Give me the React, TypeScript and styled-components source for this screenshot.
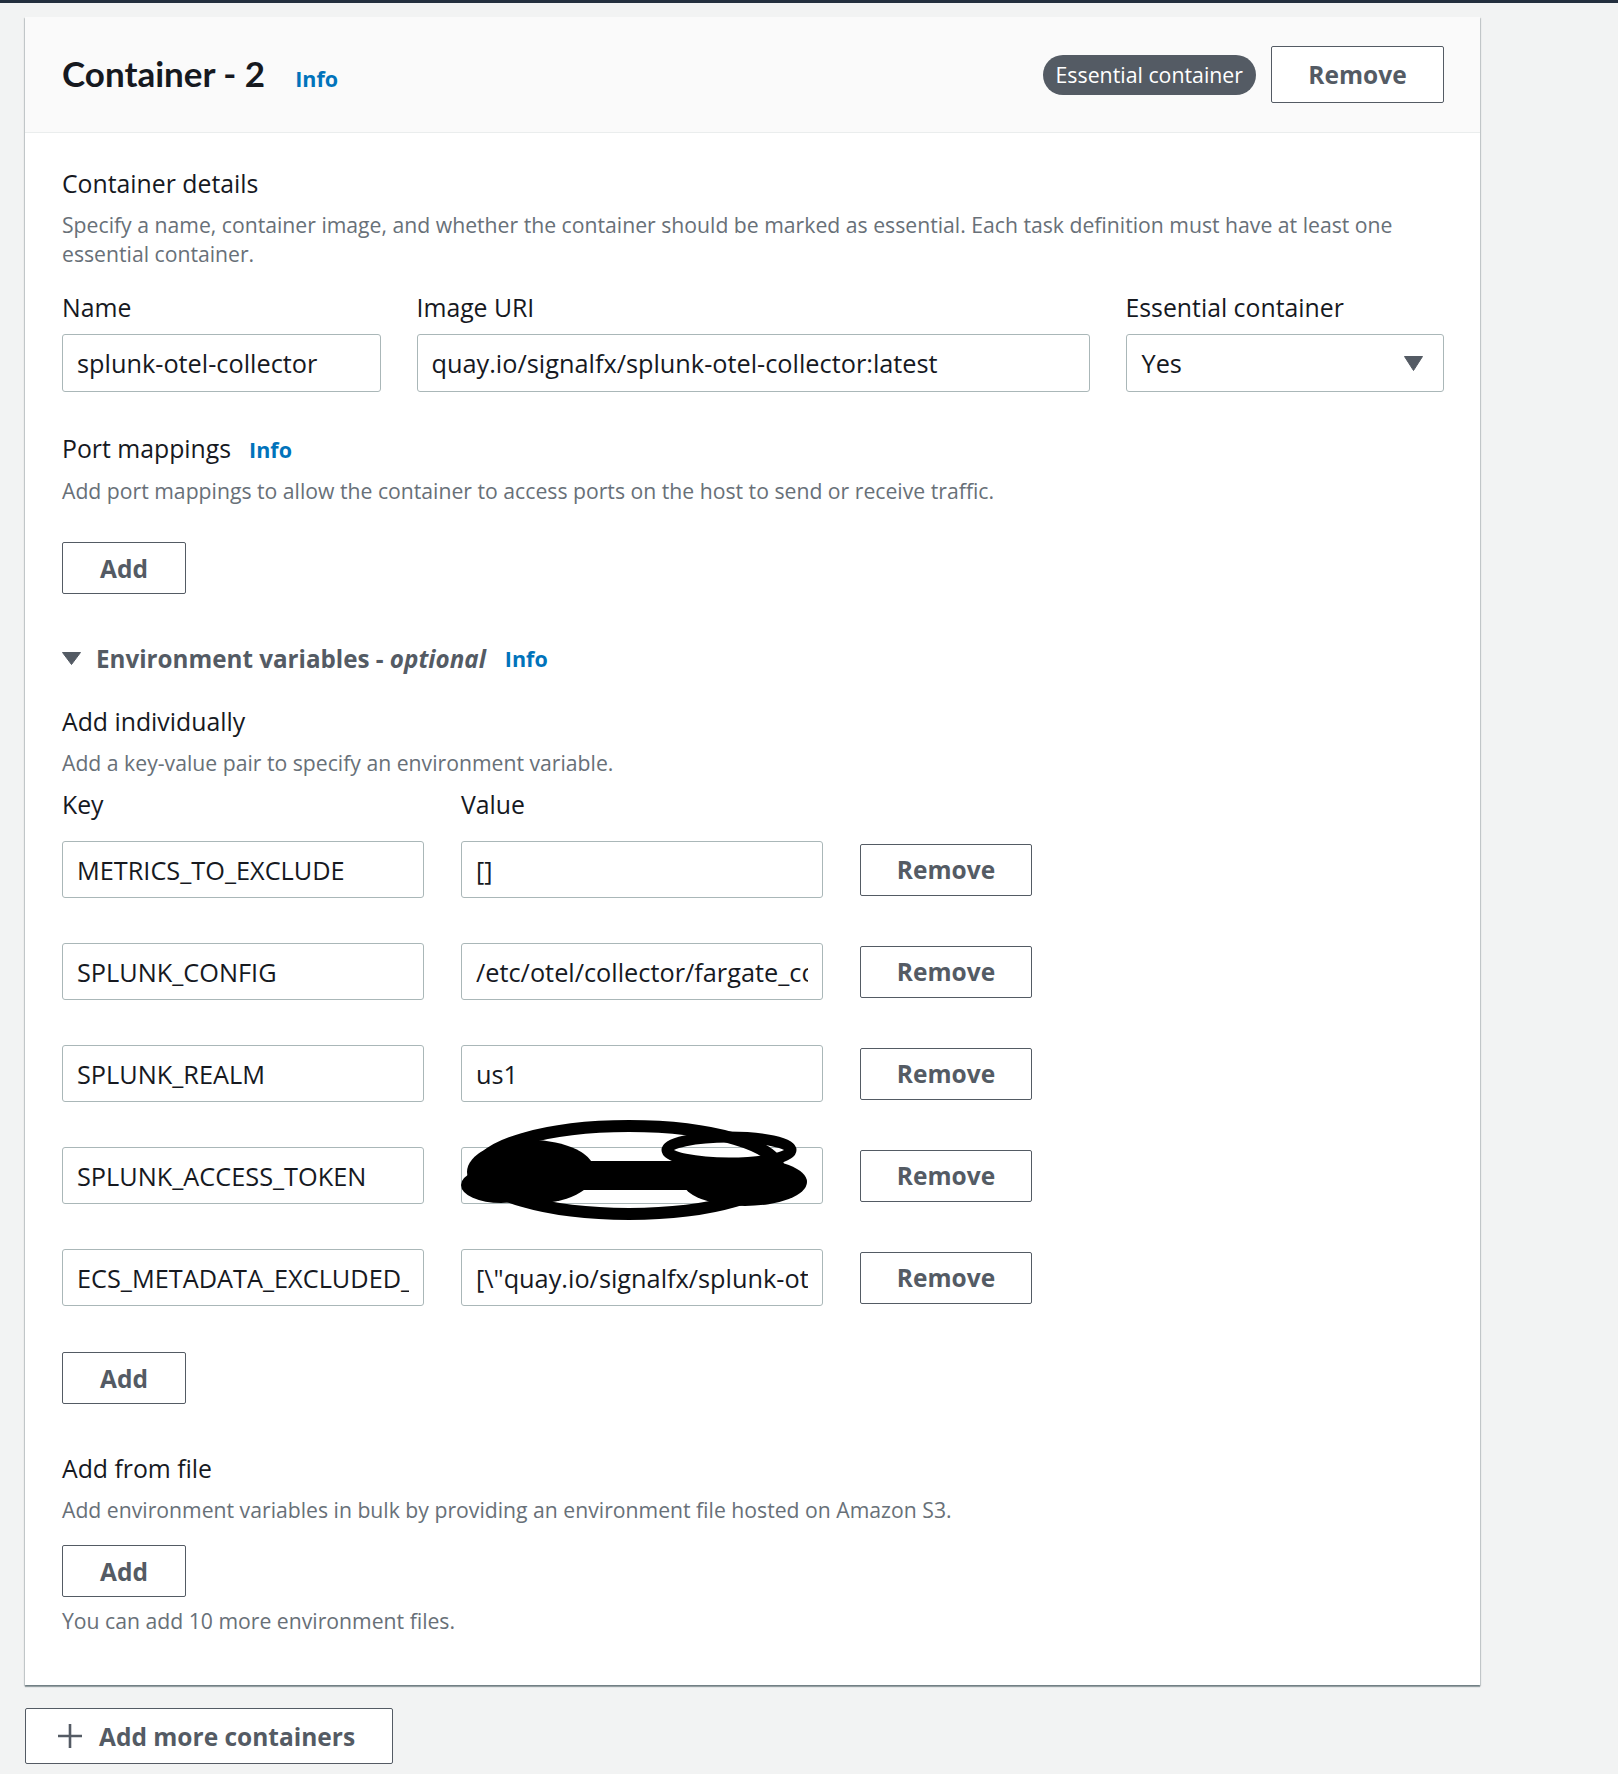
import { ReactElement, Fragment } from 'react'
import styled, { createGlobalStyle } from 'styled-components'

const GlobalStyle = createGlobalStyle`
  html, body {
    margin: 0;
    background: #f2f3f3;
  }
  body {
    font-family: "Open Sans", Lato, sans-serif;
    color: #16191f;
  }
  * {
    box-sizing: border-box;
  }
`

const Page = styled.div`
  min-height: 1774px;
  border-top: 3px solid #232f3e;
  padding: 14px 0 0 25px;
`

const Card = styled.section`
  width: 1455px;
  background: #ffffff;
  box-shadow: 0 2px 1px 0 rgba(0, 28, 36, 0.35), 1px 1px 1px 0 rgba(0, 28, 36, 0.15),
    -1px 1px 1px 0 rgba(0, 28, 36, 0.15);
`

const CardHeader = styled.header`
  height: 116px;
  display: flex;
  align-items: center;
  padding: 0 36px 0 37px;
  background: #fafafa;
  border-bottom: 1px solid #eaeded;
`

const TitleGroup = styled.div`
  display: flex;
  align-items: baseline;
  padding-bottom: 4px;
`

const Title = styled.h2`
  margin: 0;
  font-family: Lato, "Open Sans", sans-serif;
  font-size: 35px;
  line-height: 42px;
  font-weight: 700;
  color: #16191f;
`

const InfoLink = styled.a<{ $gap?: number }>`
  margin-left: ${(p) => p.$gap ?? 18}px;
  font-size: 21.5px;
  font-weight: 700;
  color: #0073bb;
  text-decoration: none;
  cursor: pointer;
`

const HeaderActions = styled.div`
  margin-left: auto;
  display: flex;
  align-items: center;
  gap: 15px;
`

const Badge = styled.span`
  display: inline-flex;
  align-items: center;
  height: 40px;
  padding: 0 13px;
  border-radius: 20px;
  background: #545b64;
  color: #ffffff;
  font-size: 21.3px;
`

const Button = styled.button<{ $width: number; $height?: number; $start?: boolean }>`
  display: inline-flex;
  align-items: center;
  justify-content: ${(p) => (p.$start ? 'flex-start' : 'center')};
  gap: 16px;
  width: ${(p) => p.$width}px;
  height: ${(p) => p.$height ?? 52}px;
  padding: ${(p) => (p.$start ? '0 0 0 31px' : '0')};
  border: 1px solid #545b64;
  border-radius: 2px;
  background: #ffffff;
  color: #545b64;
  font-family: inherit;
  font-size: 24.5px;
  font-weight: 700;
  cursor: pointer;
`

const CardBody = styled.div`
  padding: 33px 36px 50px 37px;
`

const Block = styled.div<{ $top?: number }>`
  margin-top: ${(p) => p.$top ?? 0}px;
`

const Heading = styled.div<{ $top?: number }>`
  display: flex;
  align-items: baseline;
  margin-top: ${(p) => p.$top ?? 0}px;
  font-size: 24.8px;
  line-height: 35px;
  color: #16191f;
`

const Description = styled.p<{ $top?: number }>`
  margin: ${(p) => p.$top ?? 9}px 0 0;
  font-size: 21.2px;
  line-height: 29px;
  color: #687078;
`

const FieldsGrid = styled.div`
  display: grid;
  grid-template-columns: repeat(12, 1fr);
  column-gap: 36px;
  margin-top: 22px;
`

const Field = styled.div<{ $span: number }>`
  grid-column: span ${(p) => p.$span};
`

const Label = styled.label`
  display: block;
  font-size: 24.8px;
  line-height: 35px;
  color: #16191f;
`

const TextInput = styled.input<{ $height?: number }>`
  display: block;
  width: 100%;
  height: ${(p) => p.$height ?? 58}px;
  margin-top: ${(p) => (p.$height ? 0 : 9)}px;
  padding: 0 14px;
  border: 1px solid #aab7b8;
  border-radius: 3px;
  background: #ffffff;
  font-family: inherit;
  font-size: 25.3px;
  color: #16191f;
  outline: none;
`

const Select = styled.div`
  display: flex;
  align-items: center;
  justify-content: space-between;
  height: 58px;
  margin-top: 9px;
  padding: 0 20px 0 15px;
  border: 1px solid #aab7b8;
  border-radius: 3px;
  font-size: 25.3px;
  color: #16191f;
`

const ExpandHeader = styled.div`
  display: flex;
  align-items: center;
  margin-top: 47px;
  height: 35px;
  font-size: 24.2px;
  font-weight: 700;
  color: #545b64;
`

const Caret = styled.svg`
  margin-right: 15px;
  flex: none;
`

const Optional = styled.em`
  font-style: italic;
`

const PairGrid = styled.div<{ $top?: number; $gap?: number }>`
  display: grid;
  grid-template-columns: 362px 362px 172px;
  column-gap: 37px;
  row-gap: ${(p) => p.$gap ?? 45}px;
  align-items: center;
  margin-top: ${(p) => p.$top ?? 0}px;
`

const ValueCell = styled.div`
  position: relative;
`

const Redaction = styled.svg`
  position: absolute;
  left: -5px;
  top: -34px;
  pointer-events: none;
`

const PlusIcon = styled.svg`
  flex: none;
`

const AddMore = styled.div`
  margin-top: 23px;
`

const envVars = [
  { key: 'METRICS_TO_EXCLUDE', value: '[]' },
  { key: 'SPLUNK_CONFIG', value: '/etc/otel/collector/fargate_config.yaml' },
  { key: 'SPLUNK_REALM', value: 'us1' },
  { key: 'SPLUNK_ACCESS_TOKEN', value: '', redacted: true },
  { key: 'ECS_METADATA_EXCLUDED_IMAGES', value: '[\\"quay.io/signalfx/splunk-otel-collector:latest\\"]' },
]

// black marker scribble hiding the token value
const Scribble = (): ReactElement => (
  <Redaction width="360" height="113" viewBox="455 1112 360 113">
    <ellipse cx="628" cy="1169" rx="150" ry="44" fill="none" stroke="#000" strokeWidth="12" />
    <ellipse cx="530" cy="1171" rx="64" ry="32" fill="#000" />
    <ellipse cx="500" cy="1184" rx="40" ry="18" fill="#000" />
    <rect x="580" y="1160" width="135" height="29" fill="#000" />
    <ellipse cx="728" cy="1149" rx="62" ry="13" fill="none" stroke="#000" strokeWidth="11" />
    <ellipse cx="744" cy="1181" rx="62" ry="24" fill="#000" />
  </Redaction>
)

const App = (): ReactElement => {
  return (
    <Page>
      <GlobalStyle />
      <Card>
        <CardHeader>
          <TitleGroup>
            <Title>Container - 2</Title>
            <InfoLink $gap={30}>Info</InfoLink>
          </TitleGroup>
          <HeaderActions>
            <Badge>Essential container</Badge>
            <Button $width={173} $height={57}>
              Remove
            </Button>
          </HeaderActions>
        </CardHeader>

        <CardBody>
          <Heading>Container details</Heading>
          <Description>
            Specify a name, container image, and whether the container should be marked as essential. Each task
            definition must have at least one essential container.
          </Description>

          <FieldsGrid>
            <Field $span={3}>
              <Label>Name</Label>
              <TextInput readOnly value="splunk-otel-collector" />
            </Field>
            <Field $span={6}>
              <Label>Image URI</Label>
              <TextInput readOnly value="quay.io/signalfx/splunk-otel-collector:latest" />
            </Field>
            <Field $span={3}>
              <Label>Essential container</Label>
              <Select>
                <span>Yes</span>
                <svg width="19" height="15" viewBox="0 0 19 15">
                  <path d="M0.5 0.5h18L9.5 14.5z" fill="#545b64" stroke="#545b64" strokeLinejoin="round" />
                </svg>
              </Select>
            </Field>
          </FieldsGrid>

          <Heading $top={39}>
            Port mappings
            <InfoLink>Info</InfoLink>
          </Heading>
          <Description>Add port mappings to allow the container to access ports on the host to send or receive traffic.</Description>
          <Block $top={37}>
            <Button $width={124}>Add</Button>
          </Block>

          <ExpandHeader>
            <Caret width="19" height="13" viewBox="0 0 19 13">
              <path d="M0.5 0.5h18L9.5 12.5z" fill="#545b64" stroke="#545b64" strokeLinejoin="round" />
            </Caret>
            <span>
              Environment variables - <Optional>optional</Optional>
            </span>
            <InfoLink $gap={19}>Info</InfoLink>
          </ExpandHeader>

          <Heading $top={28}>Add individually</Heading>
          <Description>Add a key-value pair to specify an environment variable.</Description>

          <PairGrid $top={10}>
            <Label>Key</Label>
            <Label>Value</Label>
          </PairGrid>
          <PairGrid $top={19}>
            {envVars.map((v) => (
              <Fragment key={v.key}>
                <TextInput readOnly value={v.key} $height={57} />
                <ValueCell>
                  <TextInput readOnly value={v.value} $height={57} />
                  {v.redacted && <Scribble />}
                </ValueCell>
                <Button $width={172}>Remove</Button>
              </Fragment>
            ))}
          </PairGrid>
          <Block $top={46}>
            <Button $width={124}>Add</Button>
          </Block>

          <Heading $top={47}>Add from file</Heading>
          <Description>Add environment variables in bulk by providing an environment file hosted on Amazon S3.</Description>
          <Block $top={21}>
            <Button $width={124}>Add</Button>
          </Block>
          <Description>You can add 10 more environment files.</Description>
        </CardBody>
      </Card>

      <AddMore>
        <Button $width={368} $height={56} $start>
          <PlusIcon width="26" height="26" viewBox="0 0 26 26">
            <path d="M13 1v24M1 13h24" stroke="#545b64" strokeWidth="2.6" />
          </PlusIcon>
          Add more containers
        </Button>
      </AddMore>
    </Page>
  )
}

export default App
